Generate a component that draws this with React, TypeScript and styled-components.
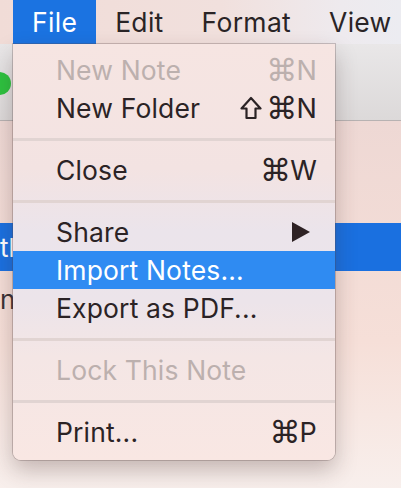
import React from "react";
import styled, { createGlobalStyle } from "styled-components";

const Global = createGlobalStyle`
  html, body { margin: 0; padding: 0; }
  body { width: 401px; height: 488px; overflow: hidden; font-family: Inter, "Noto Sans", "DejaVu Sans", sans-serif; }
`;

const Page = styled.div`
  position: relative;
  width: 401px;
  height: 488px;
  overflow: hidden;
  display: flex;
  flex-direction: column;
  background: #f2dfda;
`;

const MenuBar = styled.div`
  height: 44px;
  display: flex;
  align-items: stretch;
  padding-left: 13px;
  background: linear-gradient(90deg, #f1dcd7 0%, #f1e0dd 55%, #eeeaee 85%, #ececf1 100%);
`;

const BarItem = styled.div<{ $active?: boolean }>`
  display: flex;
  align-items: center;
  padding: 0 19px;
  font-size: 26.5px;
  letter-spacing: 0.3px;
  color: ${(p) => (p.$active ? "#ffffff" : "#2a2426")};
  background: ${(p) => (p.$active ? "#1b73e1" : "transparent")};
`;

const Toolbar = styled.div`
  height: 76px;
  border-bottom: 1px solid #b7b2b2;
  background: linear-gradient(180deg, #e9e7e8 0%, #dcd9d9 100%);
  position: relative;
`;

const TrafficLight = styled.div`
  position: absolute;
  left: -12px;
  top: 28px;
  width: 23px;
  height: 23px;
  border-radius: 50%;
  background: #2dc23f;
`;

const Content = styled.div`
  flex: 1;
  display: flex;
  flex-direction: column;
  padding-top: 102px;
  background: linear-gradient(180deg, #eed8d4 0%, #f6dfd8 60%, #f8efec 100%);
`;

const ListRow = styled.div<{ $selected?: boolean }>`
  height: ${(p) => (p.$selected ? "48px" : "40px")};
  display: flex;
  align-items: center;
  font-size: 26px;
  color: ${(p) => (p.$selected ? "#ffffff" : "#3a3236")};
  background: ${(p) => (p.$selected ? "#1a70e0" : "transparent")};
  padding-left: 0;
  margin-top: ${(p) => (p.$selected ? "0" : "8px")};
`;

const Menu = styled.div`
  position: absolute;
  left: 13px;
  top: 44px;
  width: 322px;
  padding: 7px 0 9px;
  box-sizing: border-box;
  display: flex;
  flex-direction: column;
  border-radius: 0 0 8px 8px;
  background: linear-gradient(
    180deg,
    #f6e5e2 0%,
    #f3e3e2 30%,
    #ebe4eb 45%,
    #ece4ea 62%,
    #f4e6e5 75%,
    #f9e7e3 100%
  );
  box-shadow: 0 0 0 1px rgba(90, 70, 70, 0.28), 0 10px 22px rgba(60, 40, 40, 0.28);
`;

const Item = styled.div<{ $disabled?: boolean; $active?: boolean }>`
  height: 38px;
  display: flex;
  align-items: center;
  justify-content: space-between;
  padding: 0 18px 0 43px;
  font-size: 26.5px;
  letter-spacing: 0.15px;
  color: ${(p) => (p.$active ? "#ffffff" : p.$disabled ? "#bcb0ae" : "#2b2325")};
  background: ${(p) => (p.$active ? "#2f8bf2" : "transparent")};
`;

const Shortcut = styled.span`
  display: flex;
  align-items: center;
`;

const Cmd = styled.span`
  font-family: "DejaVu Sans", sans-serif;
  font-size: 31px;
  line-height: 1;
  margin-right: -1px;
`;

const Key = styled.span`
  font-family: Inter, sans-serif;
  font-size: 27px;
`;

const ShiftIcon = styled.svg`
  width: 22px;
  height: 24px;
  margin-right: 4px;
`;

const Arrow = styled.span`
  width: 0;
  height: 0;
  margin-right: 7px;
  border-top: 10px solid transparent;
  border-bottom: 10px solid transparent;
  border-left: 18px solid #2e2224;
`;

const Separator = styled.div`
  height: 24px;
  display: flex;
  align-items: center;
  &::after {
    content: "";
    display: block;
    width: 100%;
    height: 3px;
    background: #e1d4d2;
  }
`;

function Shift() {
  return (
    <ShiftIcon viewBox="0 0 22 24">
      <path
        d="M11 2 L20.5 12.5 H15.5 V22 H6.5 V12.5 H1.5 Z"
        fill="none"
        stroke="currentColor"
        strokeWidth="2.2"
        strokeLinejoin="round"
      />
    </ShiftIcon>
  );
}

export default function App() {
  return (
    <>
      <Global />
      <Page>
        <MenuBar>
          <BarItem $active>File</BarItem>
          <BarItem>Edit</BarItem>
          <BarItem>Format</BarItem>
          <BarItem>View</BarItem>
        </MenuBar>
        <Toolbar>
          <TrafficLight />
        </Toolbar>
        <Content>
          <ListRow $selected>tl</ListRow>
          <ListRow>ni</ListRow>
        </Content>
        <Menu>
          <Item $disabled>
            <span>New Note</span>
            <Shortcut>
              <Cmd>⌘</Cmd>
              <Key>N</Key>
            </Shortcut>
          </Item>
          <Item>
            <span>New Folder</span>
            <Shortcut>
              <Shift />
              <Cmd>⌘</Cmd>
              <Key>N</Key>
            </Shortcut>
          </Item>
          <Separator />
          <Item>
            <span>Close</span>
            <Shortcut>
              <Cmd>⌘</Cmd>
              <Key>W</Key>
            </Shortcut>
          </Item>
          <Separator />
          <Item>
            <span>Share</span>
            <Arrow />
          </Item>
          <Item $active>
            <span>Import Notes...</span>
          </Item>
          <Item>
            <span>Export as PDF...</span>
          </Item>
          <Separator />
          <Item $disabled>
            <span>Lock This Note</span>
          </Item>
          <Separator />
          <Item>
            <span>Print...</span>
            <Shortcut>
              <Cmd>⌘</Cmd>
              <Key>P</Key>
            </Shortcut>
          </Item>
        </Menu>
      </Page>
    </>
  );
}
